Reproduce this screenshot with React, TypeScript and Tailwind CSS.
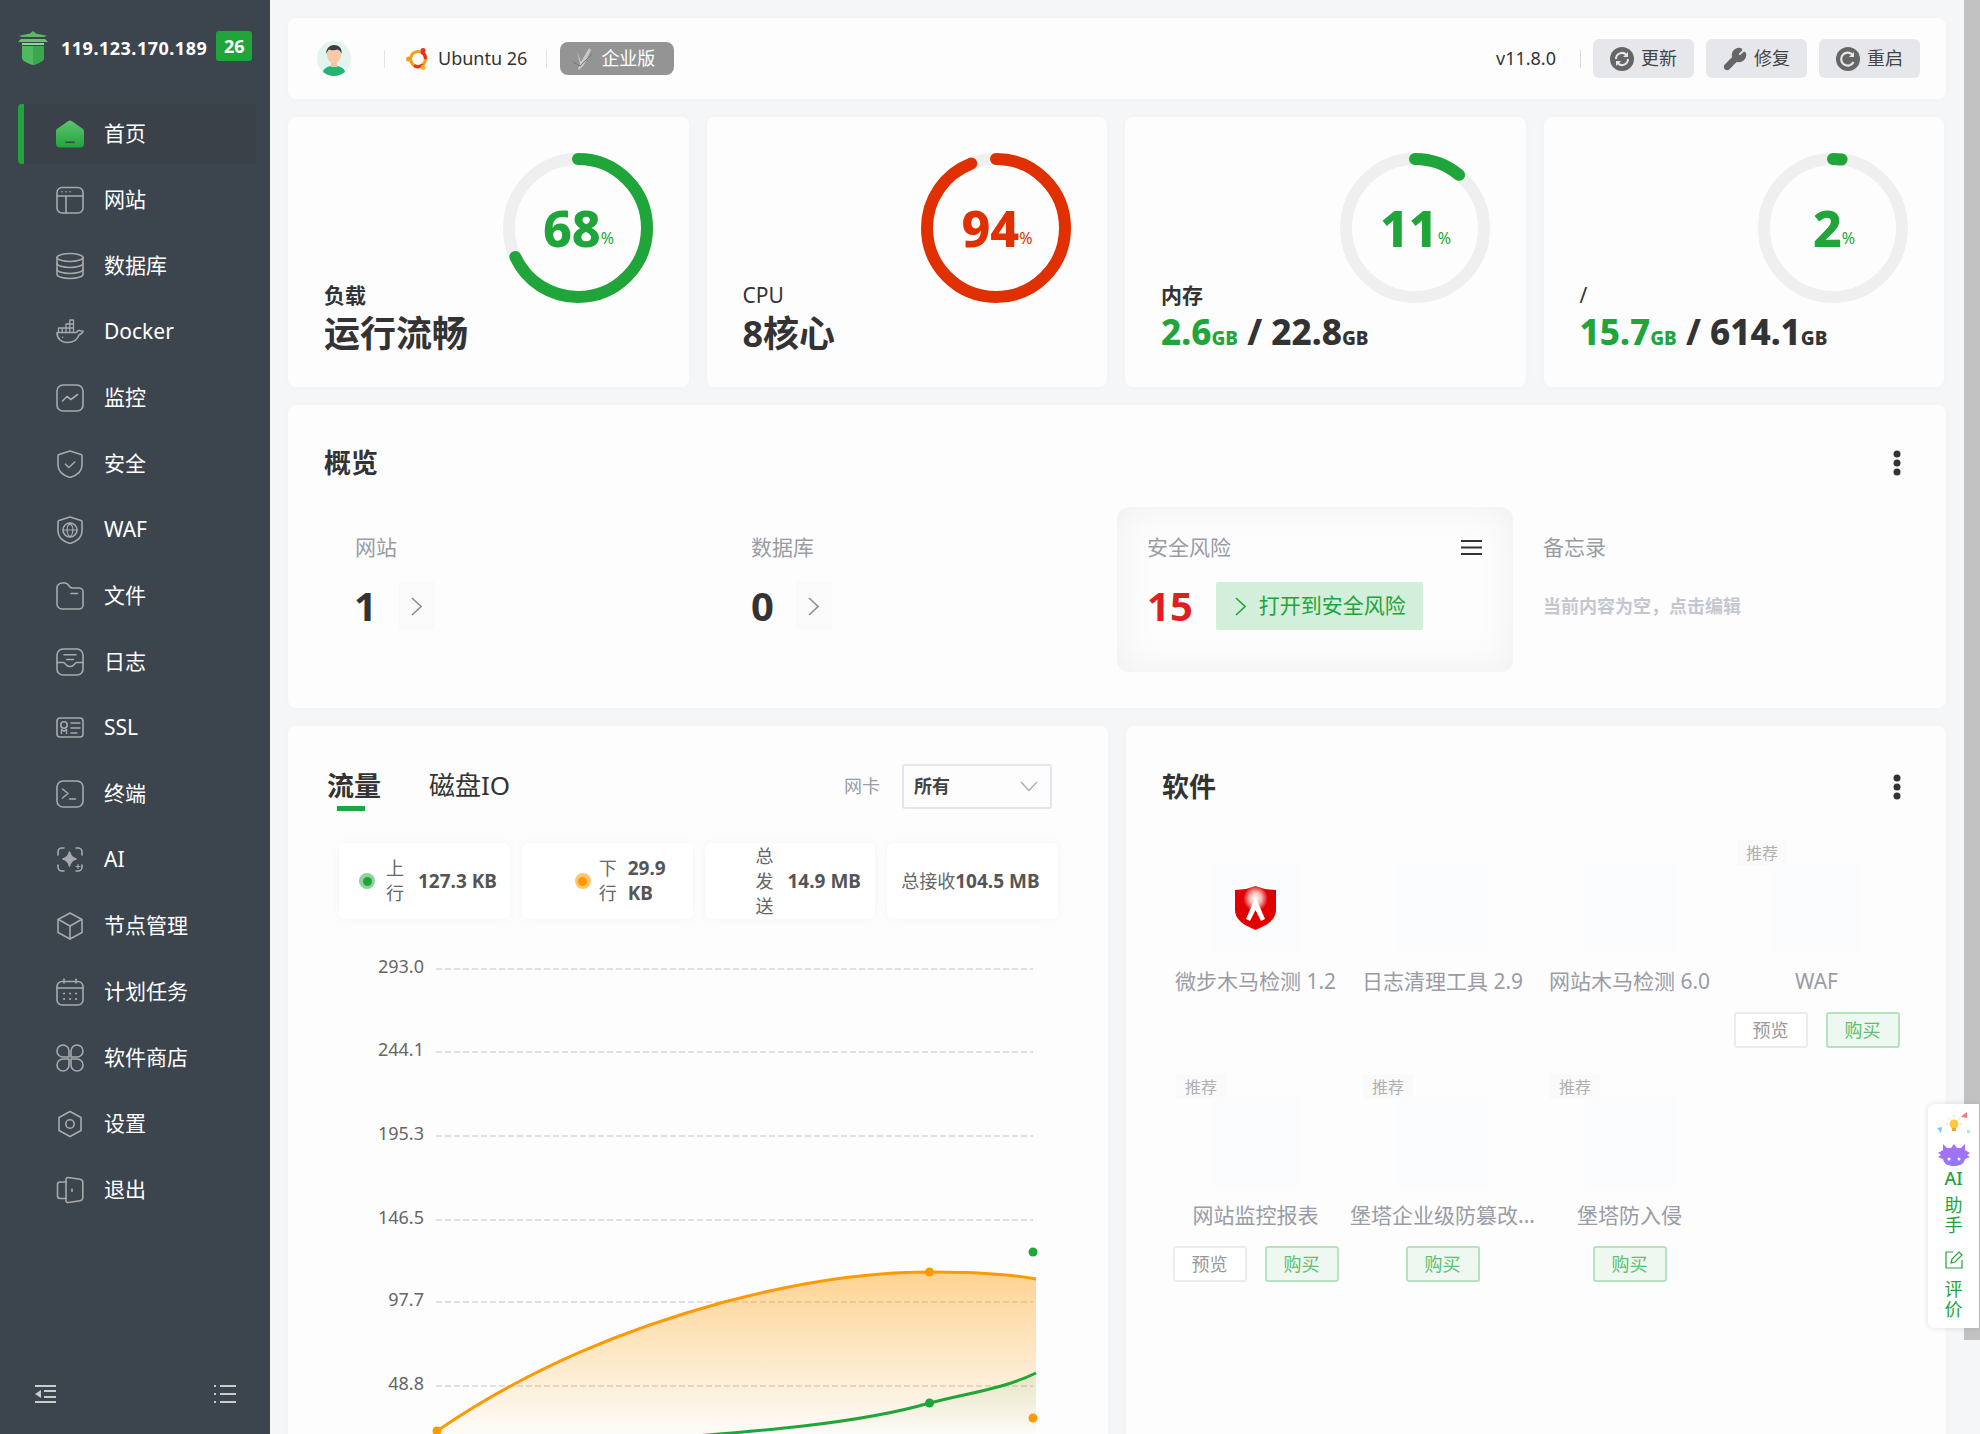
import React from "react";
import { Wrench } from "lucide-react";

const S = ({ children, w = 28 }: { children: React.ReactNode; w?: number }) => (
  <svg width={w} height={w} viewBox="0 0 28 28" fill="none" stroke="currentColor" strokeWidth="1.6" strokeLinecap="round" strokeLinejoin="round" className="shrink-0 text-[#a7aaad]">
    {children}
  </svg>
);

const icons: Record<string, React.ReactNode> = {
  home: (
    <svg width="28" height="28" viewBox="0 0 28 28" className="shrink-0">
      <defs>
        <linearGradient id="hg" x1="0" y1="0" x2="0" y2="1">
          <stop offset="0" stopColor="#5fc46f" />
          <stop offset="1" stopColor="#20a53a" />
        </linearGradient>
      </defs>
      <path d="M12 1.200a3.200 3.200 0 0 1 4 0l9.600 6.800A3.400 3.400 0 0 1 28 11v12.600a4 4 0 0 1-4 4H4a4 4 0 0 1-4-4V11a3.400 3.400 0 0 1 2.400-3z" fill="url(#hg)" />
      <rect x="9.500" y="21.500" width="9" height="1.600" fill="#3c444d" />
    </svg>
  ),
  web: (
    <S>
      <rect x="1" y="1.500" width="26" height="25.500" rx="5" />
      <path d="M1 10h26M10 10v17" />
      <path d="M6 5.700h.1M10 5.700h.1M14 5.700h.1" />
    </S>
  ),
  db: (
    <S>
      <ellipse cx="14" cy="5.500" rx="13" ry="4" />
      <path d="M1 5.500v17c0 2.200 5.800 4 13 4s13-1.800 13-4v-17" />
      <path d="M1 11.500c0 2.200 5.800 4 13 4s13-1.800 13-4M1 17.500c0 2.200 5.800 4 13 4s13-1.800 13-4" />
    </S>
  ),
  docker: (
    <S>
      <path d="M1 14.500h19.500c.8-1.800 2.400-2.400 3.200-1.900.6.400 1.300.3 3.300.6-.7 2.200-2.200 3.100-3.800 3.300C21.500 21.500 17.500 24.500 11.500 24.500 5 24.500 1 20.500 1 14.500z" />
      <path d="M2.500 14.500V10h15v4.500M6.200 10v4.500M10 10v4.500M13.800 10v4.500M10 10V6h3.800M13.800 10V2h3.700v8M13.800 6h3.700" strokeWidth="1.300" />
      <path d="M6.500 19.200h.1" />
    </S>
  ),
  monitor: (
    <S>
      <rect x="1" y="1" width="26" height="26" rx="6" />
      <path d="M6.500 17l4.500-4.500 4 3 6.500-5" />
    </S>
  ),
  shield: (
    <S>
      <path d="M14 1l11 3.500c.6.200 1 .8 1 1.400V15c0 6.500-5.500 10.500-12 12.500C7.500 25.500 2 21.500 2 15V5.900c0-.6.400-1.200 1-1.400z" />
      <path d="M9.500 14.200l3.300 3.300 6-5.500" />
    </S>
  ),
  waf: (
    <S>
      <path d="M14 1l11 3.500c.6.200 1 .8 1 1.400V15c0 6.500-5.500 10.500-12 12.500C7.500 25.500 2 21.500 2 15V5.900c0-.6.400-1.200 1-1.400z" />
      <circle cx="14" cy="14" r="7" />
      <path d="M7 14h14M14 7c-4 4-4 10 0 14M14 7c4 4 4 10 0 14" strokeWidth="1.200" />
    </S>
  ),
  folder: (
    <S>
      <path d="M1 6a5 5 0 0 1 5-5h3c2 0 3 1 4.500 3.500 1 1.500 1.500 1.500 3 1.500H23a4 4 0 0 1 4 4v13a4 4 0 0 1-4 4H6a5 5 0 0 1-5-5z" />
      <path d="M15 11.500h6.500" />
    </S>
  ),
  log: (
    <S>
      <rect x="1" y="1" width="26" height="26" rx="6" />
      <path d="M1 14.500h6.500c2 0 2 4 6.500 4s4.500-4 6.500-4H27M8 6.800h12M10.500 11.500h7" />
    </S>
  ),
  ssl: (
    <S>
      <rect x="1" y="4" width="26" height="19" rx="3" />
      <circle cx="8" cy="11" r="3.200" />
      <path d="M5.500 19.500v-4l2.500 1.700 2.500-1.700v4M15 9h9M15 14h9M15 19h6" strokeWidth="1.400" />
    </S>
  ),
  term: (
    <S>
      <rect x="1" y="1" width="26" height="26" rx="6" />
      <path d="M6.500 9l5.500 4.500-5.500 4.500M13.500 19h6" />
    </S>
  ),
  ai: (
    <S>
      <path d="M8 2H6a4 4 0 0 0-4 4v3M20 2h2a4 4 0 0 1 4 4v3M8 25H6a4 4 0 0 1-4-4v-2M20 25h2a4 4 0 0 0 4-4v-2" />
      <path d="M13.500 6c.8 4 2.500 6 6.500 7-4 1-5.700 3-6.500 7-.8-4-2.500-6-6.500-7 4-1 5.700-3 6.500-7z" fill="currentColor" />
      <path d="M22 18.500v4M20 20.500h4" strokeWidth="1.200" />
    </S>
  ),
  node: (
    <S>
      <path d="M14 1l12 6.500v13L14 27 2 20.500v-13z" />
      <path d="M2.500 7.500L14 14l11.500-6.500M14 14v13" />
    </S>
  ),
  cal: (
    <S>
      <rect x="1" y="3.500" width="26" height="23.500" rx="5" />
      <path d="M1 10h26M8 1v4M20 1v4" />
      <path d="M8 15.500h.1M14 15.500h.1M20 15.500h.1M8 21h.1M14 21h.1M20 21h.1" strokeWidth="2" />
    </S>
  ),
  store: (
    <S>
      <path d="M7 1a6 6 0 0 1 6 6v6H7A6 6 0 0 1 7 1zM21 1a6 6 0 0 1 0 12h-6V7a6 6 0 0 1 6-6zM7 15h6v6a6 6 0 1 1-6-6zM15 15h6a6 6 0 1 1-6 6z" />
    </S>
  ),
  set: (
    <S>
      <path d="M14 1.500l11 6v13l-11 6-11-6v-13z" />
      <circle cx="14" cy="14" r="4.200" />
    </S>
  ),
  out: (
    <S>
      <path d="M10 6H4a2.500 2.500 0 0 0-2.500 2.500V20A2.500 2.500 0 0 0 4 22.500h6" />
      <path d="M10 3.500a2 2 0 0 1 2.300-2L24 3.200c1.600.2 2.800 1.600 2.800 3.200v15.200c0 1.600-1.200 3-2.800 3.200l-11.700 1.700a2 2 0 0 1-2.300-2z" />
      <path d="M16 13v2.500" />
    </S>
  ),
};

const nav: [string, string][] = [
  ["home", "首页"],
  ["web", "网站"],
  ["db", "数据库"],
  ["docker", "Docker"],
  ["monitor", "监控"],
  ["shield", "安全"],
  ["waf", "WAF"],
  ["folder", "文件"],
  ["log", "日志"],
  ["ssl", "SSL"],
  ["term", "终端"],
  ["ai", "AI"],
  ["node", "节点管理"],
  ["cal", "计划任务"],
  ["store", "软件商店"],
  ["set", "设置"],
  ["out", "退出"],
];

function Sidebar() {
  return (
    <aside className="flex h-[1434px] w-[270px] shrink-0 flex-col bg-[#3c444d]">
      <div className="flex h-[104px] shrink-0 items-start pl-[18px] pt-[31px]">
        <svg width="30" height="34" viewBox="0 0 30 34" className="shrink-0">
          <path d="M15 0l3 2.500 11 2.300-3 1.200H4L1 4.800 12 2.500z" fill="#5cb85c" />
          <path d="M3 8h24l3 3H0z" fill="#6cc070" />
          <path d="M4 12h22v2H4z" fill="#8fd49a" />
          <path d="M4 15h22v12c0 3-6 5.500-11 7-5-1.500-11-4-11-7z" fill="#4eb960" />
          <path d="M15 15h11v12c0 3-6 5.500-11 7z" fill="#3aa84c" />
        </svg>
        <span className="ml-[13px] text-[18px] font-bold leading-[34px] tracking-[0.5px] text-white">119.123.170.189</span>
        <span className="ml-[9px] flex h-[30px] w-[36px] items-center justify-center rounded-[3px] bg-[#20a53a] text-[18px] font-bold text-white">26</span>
      </div>
      <nav className="flex flex-col gap-[6px]">
        {nav.map(([ic, label], i) => (
          <div
            key={label}
            className={
              i === 0
                ? "ml-[18px] mr-[14px] flex h-[60px] items-center gap-[20px] rounded-l-[4px] border-l-[6px] border-[#20a53a] bg-[#3a4149] pl-[32px] text-[21px] text-white"
                : "ml-[18px] mr-[14px] flex h-[60px] items-center gap-[20px] border-l-[6px] border-transparent pl-[32px] text-[21px] text-white"
            }
          >
            {icons[ic]}
            <span>{label}</span>
          </div>
        ))}
      </nav>
      <div className="mt-auto flex items-center justify-between pb-[31px] pl-[35px] pr-[34px]">
        <svg width="21" height="18" viewBox="0 0 21 18" fill="#c9cbcd">
          <rect x="0" y="0" width="21" height="2" />
          <rect x="9" y="5" width="12" height="2" />
          <rect x="9" y="11" width="12" height="2" />
          <rect x="0" y="16" width="21" height="2" />
          <path d="M6 5v8L0 9z" />
        </svg>
        <svg width="22" height="18" viewBox="0 0 22 18" fill="#c9cbcd">
          <rect x="6" y="0" width="16" height="2" />
          <rect x="6" y="8" width="16" height="2" />
          <rect x="6" y="16" width="16" height="2" />
          <rect x="0" y="0" width="2" height="2" />
          <rect x="0" y="8" width="2" height="2" />
          <rect x="0" y="16" width="2" height="2" />
        </svg>
      </div>
    </aside>
  );
}

function Header() {
  const btnCls = "flex h-[39px] w-[101px] items-center justify-center gap-[7px] rounded-[6px] bg-[#e6e7eb] text-[18px] text-[#444]";
  return (
    <div className="flex h-[81px] shrink-0 items-center rounded-[8px] bg-[#fdfdfd] pl-[29px] pr-[26px] shadow-[0_0_10px_rgba(0,0,0,0.02)]">
      <svg width="34" height="35" viewBox="0 0 34 35" className="shrink-0">
        <ellipse cx="17" cy="17.500" rx="17" ry="17.500" fill="#e3f4ee" />
        <path d="M6 31c1-5 6-6 11-6s10 1 11 6a17 17 0 0 1-22 0z" fill="#21b573" />
        <rect x="14" y="20" width="6" height="6" fill="#f3c4a2" />
        <ellipse cx="17" cy="14" rx="7" ry="8" fill="#f7c9a7" />
        <path d="M9.500 13c-1-5 3-9 7.500-9s8.500 3 7.500 9c-1-3-2.500-4-4-4.500-3 1-7 1-8.500 0-1 1-2 2.500-2.500 4.500z" fill="#3d3d3d" />
      </svg>
      <span className="ml-[33px] h-[18px] w-px bg-[#e4e4e4]" />
      <svg width="24" height="24" viewBox="0 0 24 24" className="ml-[21px] shrink-0">
        <circle cx="12" cy="12" r="7.500" fill="none" stroke="#f29f1b" strokeWidth="3.200" />
        <path d="M15.500 5a7.500 7.500 0 0 1 4 7" fill="none" stroke="#e8321a" strokeWidth="3.200" />
        <path d="M8 18.500A7.500 7.500 0 0 0 17 17.600" fill="none" stroke="#e8321a" strokeWidth="3.200" />
        <circle cx="2.500" cy="12" r="2.500" fill="#f29f1b" />
        <circle cx="17" cy="3.500" r="2.500" fill="#e8321a" />
        <circle cx="17" cy="20.500" r="2.500" fill="#f9b51c" />
      </svg>
      <span className="ml-[8px] text-[18px] text-[#333]">Ubuntu 26</span>
      <span className="ml-[19px] h-[18px] w-px bg-[#e4e4e4]" />
      <span className="ml-[13px] flex h-[33px] w-[114px] items-center rounded-[8px] bg-[#949494] pl-[12px] text-[18px] text-white">
        <svg width="22" height="24" viewBox="0 0 22 24" className="mr-[7px] shrink-0">
          <path d="M5 4l4 11 8-14 2 2-7 15-5 5-1-1 2-5z" fill="#c8c8c8" />
          <path d="M1 15l7 4 12-12" fill="none" stroke="#777" strokeWidth="1" />
        </svg>
        企业版
      </span>
      <span className="ml-auto text-[18px] text-[#333]">v11.8.0</span>
      <span className="ml-[24px] h-[18px] w-px bg-[#d8d8d8]" />
      <div className="ml-[12px] flex gap-[12px]">
        <div className={btnCls}>
          <svg width="24" height="24" viewBox="0 0 24 24">
            <circle cx="12" cy="12" r="12" fill="#666" />
            <path d="M6 12a6 6 0 0 1 10.500-4M18 12a6 6 0 0 1-10.500 4" fill="none" stroke="#e6e7eb" strokeWidth="2" />
            <path d="M18 5v5h-5zM6 19v-5h5z" fill="#e6e7eb" />
          </svg>
          更新
        </div>
        <div className={btnCls}>
          <Wrench size={24} fill="#666" stroke="#666" strokeWidth={2.4} />
          修复
        </div>
        <div className={btnCls}>
          <svg width="24" height="24" viewBox="0 0 24 24">
            <circle cx="12" cy="12" r="12" fill="#666" />
            <path d="M17 8.500A6.500 6.500 0 1 0 17.500 15" fill="none" stroke="#e6e7eb" strokeWidth="2.200" />
            <path d="M18 5v5h-5z" fill="#e6e7eb" />
          </svg>
          重启
        </div>
      </div>
    </div>
  );
}

function Ring({ pct, color }: { pct: number; color: string }) {
  const c = 2 * Math.PI * 69;
  return (
    <div className="relative h-[150px] w-[150px] shrink-0">
      <svg width="150" height="150" viewBox="0 0 150 150" className="-rotate-90">
        <circle cx="75" cy="75" r="69" fill="none" stroke="#efefef" strokeWidth="12" />
        <circle cx="75" cy="75" r="69" fill="none" stroke={color} strokeWidth="12" strokeLinecap="round" strokeDasharray={`${(pct / 100) * c} ${c}`} />
      </svg>
      <div className="absolute inset-0 flex items-center justify-center pl-[2px]">
        <span className="text-[50px] font-extrabold leading-none" style={{ color }}>{pct}</span>
        <span className="mt-[20px] text-[16px] leading-none" style={{ color }}>%</span>
      </div>
    </div>
  );
}

const Gb = ({ a, b }: { a: string; b: string }) => (
  <div className="-mt-[1px] flex items-baseline whitespace-pre text-[35px] font-extrabold leading-[48px] text-[#333]">
    <span className="text-[#20a53a]">{a}</span>
    <span className="text-[19px] text-[#20a53a]">GB</span>
    <span> / {b}</span>
    <span className="text-[19px]">GB</span>
  </div>
);

function StatCard({ pct, color, label, bold, value }: { pct: number; color: string; label: string; bold?: boolean; value: React.ReactNode }) {
  return (
    <div className="flex h-[270px] flex-col rounded-[8px] bg-[#fdfdfd] pl-[36px] pr-[36px] pt-[36px] shadow-[0_0_10px_rgba(0,0,0,0.02)]">
      <div className="self-end">
        <Ring pct={pct} color={color} />
      </div>
      <div className={bold ? "-mt-[22px] text-[21px] font-bold leading-[28px] text-[#333]" : "-mt-[22px] text-[21px] leading-[28px] text-[#333]"}>{label}</div>
      {value}
    </div>
  );
}

const BigText = ({ t }: { t: string }) => <div className="mt-[1px] text-[36px] font-bold leading-[48px] text-[#333]">{t}</div>;

const More = () => (
  <svg width="8" height="26" viewBox="0 0 8 26" fill="#333" className="shrink-0">
    <circle cx="4" cy="4" r="3.500" />
    <circle cx="4" cy="13" r="3.500" />
    <circle cx="4" cy="22" r="3.500" />
  </svg>
);

const Chev = ({ color }: { color: string }) => (
  <svg width="11" height="19" viewBox="0 0 11 19" fill="none" stroke={color} strokeWidth="1.600" className="shrink-0">
    <path d="M1 1l9 8.500L1 18" />
  </svg>
);

const Arrow = () => (
  <span className="ml-[22px] flex h-[48px] w-[36px] items-center justify-center bg-[#fafafa]">
    <Chev color="#8d8f96" />
  </span>
);

function Overview() {
  return (
    <div className="h-[303px] shrink-0 rounded-[8px] bg-[#fdfdfd] pl-[37px] pt-[40px] shadow-[0_0_10px_rgba(0,0,0,0.02)]">
      <div className="flex h-[36px] items-center justify-between pr-[45px]">
        <span className="-ml-[1px] text-[27px] font-bold text-[#333]">概览</span>
        <More />
      </div>
      <div className="mt-[26px] grid grid-cols-[repeat(4,396px)]">
        <div className="h-[165px] pl-[30px] pt-[26px]">
          <div className="text-[21px] leading-[28px] text-[#999ca5]">网站</div>
          <div className="mt-[21px] flex h-[48px] items-center">
            <span className="-ml-[1px] text-[40px] font-bold leading-none text-[#333]">1</span>
            <Arrow />
          </div>
        </div>
        <div className="h-[165px] pl-[30px] pt-[26px]">
          <div className="text-[21px] leading-[28px] text-[#999ca5]">数据库</div>
          <div className="mt-[21px] flex h-[48px] items-center">
            <span className="text-[40px] font-bold leading-none text-[#333]">0</span>
            <Arrow />
          </div>
        </div>
        <div className="h-[165px] rounded-[12px] pl-[30px] pr-[31px] pt-[26px] shadow-[inset_0_0_40px_rgba(0,0,0,0.06)]">
          <div className="flex items-center justify-between text-[21px] leading-[28px] text-[#999ca5]">
            安全风险
            <svg width="21" height="15" viewBox="0 0 21 15" fill="#333">
              <rect y="0" width="21" height="2" />
              <rect y="6.500" width="21" height="2" />
              <rect y="13" width="21" height="2" />
            </svg>
          </div>
          <div className="mt-[21px] flex h-[48px] items-center">
            <span className="text-[40px] font-bold leading-none text-[#e02020]">15</span>
            <span className="ml-[23px] flex h-[48px] w-[207px] items-center gap-[13px] rounded-[2px] bg-[#d3eeda] pl-[19px] text-[21px] text-[#20a53a]">
              <Chev color="#20a53a" />
              打开到安全风险
            </span>
          </div>
        </div>
        <div className="h-[165px] pl-[30px] pt-[26px]">
          <div className="text-[21px] leading-[28px] text-[#999ca5]">备忘录</div>
          <div className="mt-[21px] flex h-[48px] items-center text-[18px] font-bold text-[#c4c7cf]">当前内容为空，点击编辑</div>
        </div>
      </div>
    </div>
  );
}

function Chip({ children, pl }: { children: React.ReactNode; pl: string }) {
  return <div className={`flex h-[76px] items-center rounded-[6px] bg-white shadow-[0_0_10px_rgba(0,0,0,0.04)] ${pl}`}>{children}</div>;
}

function Traffic() {
  const ticks: [string, number][] = [
    ["293.0", 39],
    ["244.1", 122],
    ["195.3", 206],
    ["146.5", 290],
    ["97.7", 372],
    ["48.8", 456],
  ];
  return (
    <div className="h-[760px] rounded-[8px] bg-[#fdfdfd] pt-[38px] shadow-[0_0_10px_rgba(0,0,0,0.02)]">
      <div className="flex h-[45px] items-center pl-[39px] pr-[56px]">
        <span className="relative text-[27px] font-bold text-[#333]">
          流量
          <span className="absolute left-[10px] top-[40px] h-[5px] w-[28px] bg-[#20a53a]" />
        </span>
        <span className="ml-[48px] pb-[3px] text-[26px] text-[#333]">磁盘IO</span>
        <span className="ml-auto text-[18px] text-[#999ca5]">网卡</span>
        <div className="ml-[22px] flex h-[45px] w-[150px] items-center justify-between rounded-[3px] border-2 border-[#e3e6ee] pl-[10px] pr-[12px] text-[18px] font-bold text-[#444]">
          所有
          <svg width="18" height="11" viewBox="0 0 18 11" fill="none" stroke="#aaa" strokeWidth="1.300">
            <path d="M1 1l8 8.500L17 1" />
          </svg>
        </div>
      </div>
      <div className="ml-[51px] mt-[34px] grid w-[719px] grid-cols-4 gap-[12px] text-[18px] leading-[25px]">
        <Chip pl="pl-[20px]">
          <span className="flex h-[16px] w-[16px] shrink-0 items-center justify-center rounded-full bg-[#8fd29d]">
            <span className="h-[9px] w-[9px] rounded-full bg-[#20a53a]" />
          </span>
          <span className="ml-[11px] w-[18px] shrink-0 text-[#666]">上行</span>
          <span className="ml-[14px] whitespace-nowrap text-[19px] font-bold text-[#555]">127.3 KB</span>
        </Chip>
        <Chip pl="pl-[53px]">
          <span className="flex h-[16px] w-[16px] shrink-0 items-center justify-center rounded-full bg-[#ffc56e]">
            <span className="h-[9px] w-[9px] rounded-full bg-[#ff9900]" />
          </span>
          <span className="ml-[8px] w-[18px] shrink-0 text-[#666]">下行</span>
          <span className="ml-[11px] w-[48px] text-[19px] font-bold text-[#555]">29.9 KB</span>
        </Chip>
        <Chip pl="pl-[51px]">
          <span className="w-[18px] shrink-0 text-[#666]">总发送</span>
          <span className="ml-[14px] whitespace-nowrap text-[19px] font-bold text-[#555]">14.9 MB</span>
        </Chip>
        <Chip pl="pl-[14px]">
          <span className="shrink-0 text-[#666]">总接收</span>
          <span className="whitespace-nowrap text-[19px] font-bold text-[#555]">104.5 MB</span>
        </Chip>
      </div>
      <svg width="820" height="504" viewBox="0 0 820 504" className="mt-[11px] block">
        <defs>
          <linearGradient id="og" gradientUnits="userSpaceOnUse" x1="0" y1="342" x2="0" y2="504">
            <stop offset="0" stopColor="#ff9900" stopOpacity="0.42" />
            <stop offset="1" stopColor="#ff9900" stopOpacity="0.02" />
          </linearGradient>
          <linearGradient id="gg" gradientUnits="userSpaceOnUse" x1="0" y1="443" x2="0" y2="504">
            <stop offset="0" stopColor="#20a53a" stopOpacity="0.1" />
            <stop offset="1" stopColor="#20a53a" stopOpacity="0" />
          </linearGradient>
        </defs>
        {ticks.map(([t, y]) => (
          <g key={t}>
            <text x="136" y={y + 4} textAnchor="end" fontSize="18" fill="#666">{t}</text>
            <line x1="148" x2="745" y1={y} y2={y} stroke="#d6d6d6" strokeWidth="1.300" strokeDasharray="6 3" />
          </g>
        ))}
        <path d="M149 501C244 436 341 398 436 372C504 354 573.500 342 641.500 342C680 342 715 343 748 349V504H149Z" fill="url(#og)" />
        <path d="M330 512C430 504 560 497 641.500 473C680 463 715 459 748 443V504H330Z" fill="url(#gg)" />
        <path d="M149 501C244 436 341 398 436 372C504 354 573.500 342 641.500 342C680 342 715 343 748 349" fill="none" stroke="#ff9900" strokeWidth="3" />
        <path d="M330 512C430 504 560 497 641.500 473C680 463 715 459 748 443" fill="none" stroke="#20a53a" strokeWidth="3" />
        <circle cx="149" cy="501" r="4.500" fill="#ff9900" />
        <circle cx="641.500" cy="342" r="4.500" fill="#ff9900" />
        <circle cx="641.500" cy="473" r="4.500" fill="#20a53a" />
        <circle cx="745" cy="322" r="4.500" fill="#20a53a" />
        <circle cx="745" cy="488" r="4.500" fill="#ff9900" />
      </svg>
    </div>
  );
}

const Shield = () => (
  <svg width="41" height="44" viewBox="0 0 41 44">
    <defs>
      <radialGradient id="sg" cx="0.5" cy="0.28" r="0.3">
        <stop offset="0" stopColor="#ffffff" />
        <stop offset="0.5" stopColor="#f6b3ad" />
        <stop offset="1" stopColor="#e00000" />
      </radialGradient>
    </defs>
    <path d="M20.500 0L30 3l11 1v20c0 8-7 13-10 15l-10.500 5L10 39C7 37 0 32 0 24V4l11-1z" fill="url(#sg)" />
    <path d="M20 12h1l9 21-4 2-5.500-11L15 35l-4-2z" fill="#fff" />
  </svg>
);

function Software() {
  const items = [
    { name: "微步木马检测 1.2", logo: true },
    { name: "日志清理工具 2.9" },
    { name: "网站木马检测 6.0" },
    { name: "WAF", tag: true, preview: true, buy: true },
    { name: "网站监控报表", tag: true, preview: true, buy: true },
    { name: "堡塔企业级防篡改...", tag: true, buy: true },
    { name: "堡塔防入侵", tag: true, buy: true },
  ];
  return (
    <div className="h-[760px] rounded-[8px] bg-[#fdfdfd] pl-[36px] pt-[43px] shadow-[0_0_10px_rgba(0,0,0,0.02)]">
      <div className="flex h-[36px] items-center justify-between pr-[45px]">
        <span className="text-[27px] font-bold text-[#333]">软件</span>
        <More />
      </div>
      <div className="mt-[35px] grid grid-cols-[repeat(4,187px)]">
        {items.map((it) => (
          <div key={it.name} className="flex h-[234px] flex-col">
            <div className="h-[25px] pl-[14px]">
              {it.tag && <span className="flex h-[25px] w-[50px] items-center justify-center bg-[#fafafa] text-[16px] text-[#b0b0b0]">推荐</span>}
            </div>
            <div className="mx-auto -mt-[2px] flex h-[90px] w-[90px] shrink-0 items-center justify-center bg-[#fbfcfe]">{it.logo && <Shield />}</div>
            <div className="mt-[14px] whitespace-nowrap text-center text-[21px] leading-[28px] text-[#999ca5]">{it.name}</div>
            <div className="mt-[17px] flex h-[36px] justify-center gap-[18px] text-[18px]">
              {it.preview && <span className="flex h-[36px] w-[74px] items-center justify-center rounded-[3px] border-2 border-[#ececec] bg-white text-[#999]">预览</span>}
              {it.buy && <span className="flex h-[36px] w-[74px] items-center justify-center rounded-[3px] border-2 border-[#b5e2bf] bg-[#eef7f0] text-[#5cc06e]">购买</span>}
            </div>
          </div>
        ))}
      </div>
    </div>
  );
}

function AiPanel() {
  return (
    <div className="absolute right-[1px] top-[1104px] flex h-[224px] w-[51px] flex-col items-center rounded-l-[6px] bg-white text-[18px] leading-[20px] text-[#20a53a] shadow-[0_0_6px_rgba(0,0,0,0.12)]">
      <svg width="36" height="32" viewBox="0 0 36 32" className="mt-[8px] shrink-0">
        <path d="M28 2l3-2v6l-6-1z" fill="#f67b7b" />
        <path d="M1 16l5-1-1 6z" fill="#7cc4f5" />
        <rect x="31" y="18" width="3" height="3" fill="#9ff0cf" />
        <circle cx="18" cy="12" r="4.500" fill="#fdc83e" />
        <rect x="16" y="16" width="4" height="3" fill="#f0a62a" />
        <path d="M18 3v2M10 12h2M24 12h2M12 6l1.500 1.500M24 6l-1.500 1.500" stroke="#fdd468" strokeWidth="1" />
        <defs>
          <linearGradient id="mg" x1="0" y1="0" x2="0" y2="1">
            <stop offset="0" stopColor="#b06bf5" />
            <stop offset="1" stopColor="#8d7bf5" />
          </linearGradient>
        </defs>
      </svg>
      <svg width="32" height="22" viewBox="0 0 32 22" className="shrink-0">
        <path d="M5 0l4 4h4l3-4 3 4h4l4-4v6l5 3-3 2 3 2-5 2c-1 5-5 7-11 7S6 20 5 15l-5-2 3-2-3-2 5-3z" fill="url(#mg)" />
        <circle cx="11" cy="15" r="1.500" fill="#fff" />
        <circle cx="21" cy="15" r="1.500" fill="#fff" />
      </svg>
      <div className="mt-[2px] font-medium">AI</div>
      <div className="mt-[7px] w-[18px] text-center">助手</div>
      <svg width="18" height="18" viewBox="0 0 18 18" fill="none" stroke="#20a53a" strokeWidth="1.200" className="mt-[16px] shrink-0">
        <path d="M8 1H1v16h16v-8" />
        <path d="M6 12l1-4 7-7 3 3-7 7z" />
      </svg>
      <div className="mt-[10px] w-[18px] text-center">评价</div>
    </div>
  );
}

export default function App() {
  return (
    <div className="relative flex h-[1434px] w-full overflow-hidden bg-[#f5f6f7] font-['Noto_Sans','Noto_Sans_CJK_SC',sans-serif]">
      <Sidebar />
      <main className="flex h-[1434px] min-w-0 flex-1 flex-col gap-[18px] overflow-hidden px-[18px] pt-[18px]">
        <Header />
        <div className="mr-[2px] grid shrink-0 grid-cols-4 gap-[18px]">
          <StatCard pct={68} color="#20a53a" label="负载" bold value={<BigText t="运行流畅" />} />
          <StatCard pct={94} color="#e02f00" label="CPU" value={<BigText t="8核心" />} />
          <StatCard pct={11} color="#20a53a" label="内存" bold value={<Gb a="2.6" b="22.8" />} />
          <StatCard pct={2} color="#20a53a" label="/" value={<Gb a="15.7" b="614.1" />} />
        </div>
        <Overview />
        <div className="grid shrink-0 grid-cols-2 gap-[18px]">
          <Traffic />
          <Software />
        </div>
      </main>
      <div className="h-[1434px] w-[16px] shrink-0 bg-[#f5f6f7]">
        <div className="h-[1340px] w-full bg-[#c2c2c2]" />
      </div>
      <AiPanel />
    </div>
  );
}
